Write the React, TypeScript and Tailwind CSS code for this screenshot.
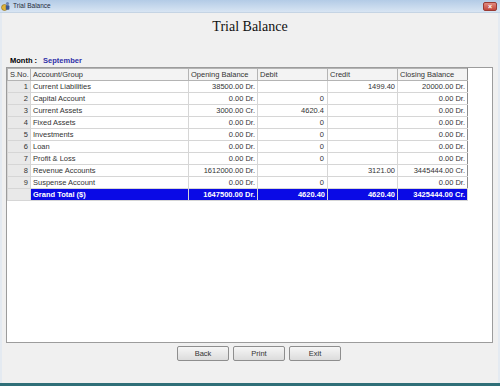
import React from 'react';

interface Row {
  no: string;
  account: string;
  opening: string;
  debit: string;
  credit: string;
  closing: string;
}

const rows: Row[] = [
  { no: '1', account: 'Current Liabilities', opening: '38500.00 Dr.', debit: '', credit: '1499.40', closing: '20000.00 Dr.' },
  { no: '2', account: 'Capital Account', opening: '0.00 Dr.', debit: '0', credit: '', closing: '0.00 Dr.' },
  { no: '3', account: 'Current Assets', opening: '3000.00 Cr.', debit: '4620.4', credit: '', closing: '0.00 Dr.' },
  { no: '4', account: 'Fixed Assets', opening: '0.00 Dr.', debit: '0', credit: '', closing: '0.00 Dr.' },
  { no: '5', account: 'Investments', opening: '0.00 Dr.', debit: '0', credit: '', closing: '0.00 Dr.' },
  { no: '6', account: 'Loan', opening: '0.00 Dr.', debit: '0', credit: '', closing: '0.00 Dr.' },
  { no: '7', account: 'Profit & Loss', opening: '0.00 Dr.', debit: '0', credit: '', closing: '0.00 Dr.' },
  { no: '8', account: 'Revenue Accounts', opening: '1612000.00 Dr.', debit: '', credit: '3121.00', closing: '3445444.00 Cr.' },
  { no: '9', account: 'Suspense Account', opening: '0.00 Dr.', debit: '0', credit: '', closing: '0.00 Dr.' },
];

const td = 'h-[12px] border border-[#d6d6d6] px-[2px] p-0 leading-[11px] whitespace-nowrap overflow-hidden';
const th = 'h-[12px] border border-[#b4b4b4] bg-[#f3f3f3] px-[2px] p-0 leading-[11px] text-left font-normal whitespace-nowrap';

function AppIcon() {
  return (
    <svg width="10" height="10" viewBox="0 0 10 10">
      <circle cx="3.5" cy="6.5" r="3" fill="#e0b43a" stroke="#8a6a1a" strokeWidth="0.6" />
      <circle cx="6.5" cy="2.5" r="1.6" fill="#6b86b8" />
      <rect x="4.8" y="4.2" width="3.6" height="4.5" rx="1" fill="#3d5a94" />
    </svg>
  );
}

export default function App() {
  return (
    <div className="w-[500px] h-[386px] flex flex-col bg-[#f0f0f0] overflow-hidden font-['Liberation_Sans',Arial,sans-serif] text-[#333]">
      {/* title bar */}
      <div className="h-[13px] flex items-center bg-gradient-to-b from-[#b3cbe6] to-[#d8e5f3] border-b border-[#c5d4e4] pl-[1px] pr-[3px]">
        <AppIcon />
        <span className="ml-[2px] text-[6.5px] leading-[8px] text-[#1e2a3a]">Trial Balance</span>
        <div className="ml-auto w-[14px] h-[9px] rounded-[2px] bg-gradient-to-b from-[#e08a80] to-[#c2443a] border border-[#9a3a32] flex items-center justify-center text-white text-[7px] leading-[7px] font-bold">
          ×
        </div>
      </div>

      <div className="flex-1 flex flex-col border-l-[2px] border-r-[2px] border-[#e4eaf1]">
        <div className="pt-[6px] text-center font-['Liberation_Serif','Times_New_Roman',serif] text-[14px] leading-[16px] text-[#111]">
          Trial Balance
        </div>

        <div className="mt-[21px] pl-[8px] h-[10px] flex items-center text-[7.5px] leading-[10px]">
          <span className="font-bold text-black">Month :</span>
          <span className="ml-[6px] font-bold text-[#2f2fa8]">September</span>
        </div>

        <div className="mt-[1px] ml-[4px] w-[487px] h-[276px] bg-white border border-[#9c9c9c]">
          <table className="table-fixed border-collapse text-[7.5px] w-[460px]">
            <colgroup>
              <col className="w-[23px]" />
              <col className="w-[158px]" />
              <col className="w-[69px]" />
              <col className="w-[70px]" />
              <col className="w-[70px]" />
              <col className="w-[70px]" />
            </colgroup>
            <thead>
              <tr>
                <th className={th}>S.No.</th>
                <th className={th}>Account/Group</th>
                <th className={th}>Opening Balance</th>
                <th className={th}>Debit</th>
                <th className={th}>Credit</th>
                <th className={`${th} border-r-[#8c8c8c]`}>Closing Balance</th>
              </tr>
            </thead>
            <tbody>
              {rows.map((r) => (
                <tr key={r.no}>
                  <td className={`${td} bg-[#e9e9e9] border-[#c4c4c4] text-right`}>{r.no}</td>
                  <td className={td}>{r.account}</td>
                  <td className={`${td} text-right`}>{r.opening}</td>
                  <td className={`${td} text-right pr-[3px]`}>{r.debit}</td>
                  <td className={`${td} text-right`}>{r.credit}</td>
                  <td className={`${td} text-right border-r-[#8c8c8c]`}>{r.closing}</td>
                </tr>
              ))}
              <tr>
                <td className={`${td} bg-[#e9e9e9] border-[#c4c4c4]`}></td>
                <td className={`${td} bg-[#0a0ae6] border-[#5a5af0] text-white font-bold`}>Grand Total ($)</td>
                <td className={`${td} bg-[#0a0ae6] border-[#5a5af0] text-white font-bold text-right`}>1647500.00 Dr.</td>
                <td className={`${td} bg-[#0a0ae6] border-[#5a5af0] text-white font-bold text-right`}>4620.40</td>
                <td className={`${td} bg-[#0a0ae6] border-[#5a5af0] text-white font-bold text-right`}>4620.40</td>
                <td className={`${td} bg-[#0a0ae6] border-[#5a5af0] text-white font-bold text-right`}>3425444.00 Cr.</td>
              </tr>
            </tbody>
          </table>
        </div>

        <div className="mt-[3px] pl-[175px] flex gap-[4px]">
          {['Back', 'Print', 'Exit'].map((b) => (
            <button
              key={b}
              className="w-[52px] h-[15px] rounded-[2px] border border-[#8e8e8e] bg-gradient-to-b from-[#f6f6f6] to-[#dcdcdc] text-[7.5px] leading-[13px] text-[#333]"
            >
              {b}
            </button>
          ))}
        </div>
        <div className="flex-1" />
      </div>
      <div className="h-[3px] bg-[#2f6f78]" />
    </div>
  );
}
